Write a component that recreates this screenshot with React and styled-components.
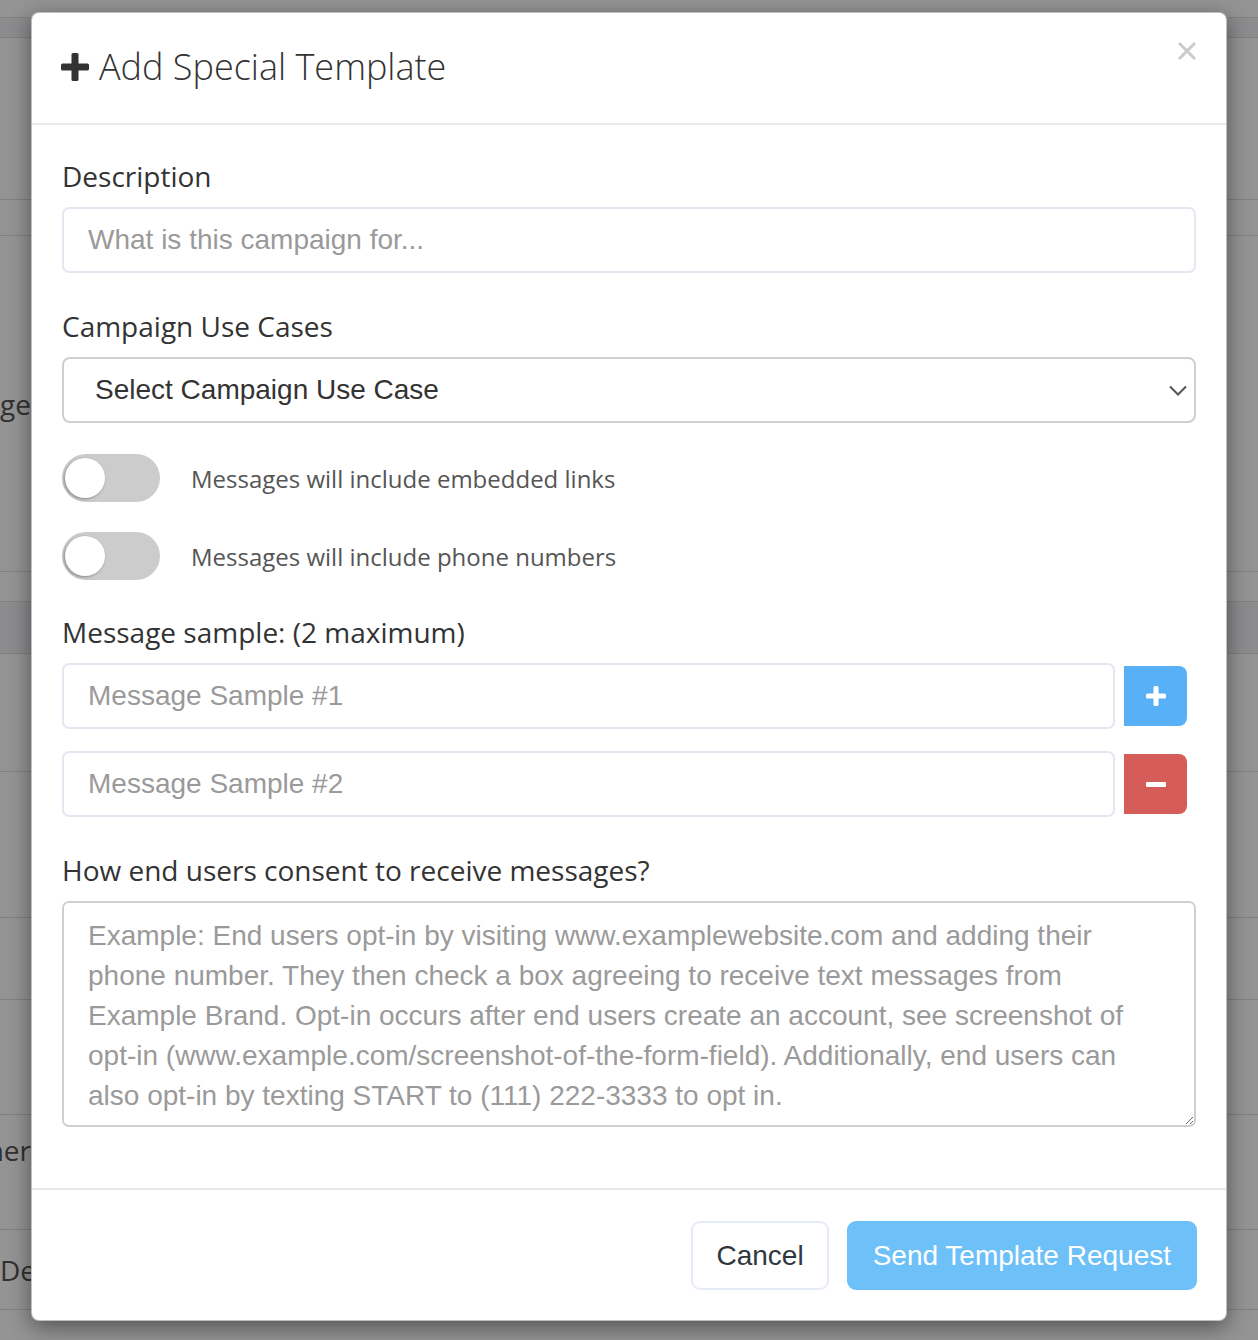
import React from "react";
import styled, { createGlobalStyle } from "styled-components";

const GlobalStyle = createGlobalStyle`
  html, body {
    margin: 0;
    padding: 0;
    background: #ffffff;
  }
  body {
    font-family: "Open Sans", "Liberation Sans", sans-serif;
    overflow: hidden;
  }
  * {
    box-sizing: border-box;
  }
`;

const Page = styled.div`
  position: relative;
  width: 1258px;
  height: 1340px;
  overflow: hidden;
  background: #fff;
`;

/* the list page that sits under the dialog */
const PageRow = styled.div`
  height: ${p => p.h}px;
  display: flex;
  align-items: ${p => (p.top ? "flex-start" : "center")};
  padding-top: ${p => p.top || 0}px;
  justify-content: space-between;
  background: ${p => (p.shade ? "#f1f2f5" : "#fff")};
  border-bottom: 1px solid #dcdcdc;
  font-size: 28px;
  color: #555;
  white-space: nowrap;
`;

const PageCell = styled.div`
  width: 31px;
  overflow: hidden;
  display: flex;
  justify-content: ${p => (p.end ? "flex-end" : "flex-start")};
`;

const Backdrop = styled.div`
  position: absolute;
  inset: 0;
  background: rgba(0, 0, 0, 0.42);
`;

const Dialog = styled.div`
  position: absolute;
  left: 31px;
  top: 12px;
  width: 1196px;
  background: #fff;
  border-radius: 8px;
  border: 1px solid rgba(0, 0, 0, 0.25);
  box-shadow: 0 6px 22px rgba(0, 0, 0, 0.45);
  display: flex;
  flex-direction: column;
`;

const Header = styled.div`
  height: 112px;
  padding: 0 28px 0 29px;
  display: flex;
  align-items: flex-start;
  justify-content: space-between;
  border-bottom: 2px solid #e8e8e8;
`;

const Title = styled.h4`
  margin: 31px 0 0;
  display: flex;
  align-items: center;
  gap: 10px;
  font-family: "Open Sans", sans-serif;
  font-weight: 300;
  font-size: 36px;
  line-height: 46px;
  color: #333;
`;

const CloseButton = styled.button`
  margin-top: 27px;
  padding: 0;
  border: none;
  background: none;
  width: 22px;
  height: 22px;
  display: flex;
  align-items: center;
  justify-content: center;
  cursor: pointer;
`;

const Body = styled.div`
  padding: 32px 30px 61px 30px;
  display: flex;
  flex-direction: column;
`;

const Group = styled.div`
  display: flex;
  flex-direction: column;
  margin-bottom: ${p => (p.mb === undefined ? 34 : p.mb)}px;
`;

const Label = styled.label`
  font-family: "Open Sans", sans-serif;
  font-size: 28px;
  line-height: 38px;
  color: #333;
  margin-bottom: 12px;
`;

const TextInput = styled.input`
  height: 66px;
  width: 100%;
  border: 2px solid #e6e6f3;
  border-radius: 7px;
  padding: 0 24px;
  font-family: "Liberation Sans", Arial, sans-serif;
  font-size: 28px;
  color: #333;
  outline: none;
  &::placeholder {
    color: #9a9a9a;
  }
`;

const SelectBox = styled.div`
  height: 66px;
  border: 2px solid #cfcfcf;
  border-radius: 8px;
  padding: 0 7px 0 31px;
  display: flex;
  align-items: center;
  justify-content: space-between;
  font-family: "Liberation Sans", Arial, sans-serif;
  font-size: 28px;
  color: #333;
`;

const ToggleRow = styled.div`
  display: flex;
  align-items: center;
  gap: 31px;
  margin-bottom: ${p => p.mb}px;
`;

const Track = styled.span`
  position: relative;
  width: 98px;
  height: 48px;
  border-radius: 24px;
  background: #cccccc;
  flex-shrink: 0;
  &::after {
    content: "";
    position: absolute;
    left: 3px;
    top: 4px;
    width: 40px;
    height: 40px;
    border-radius: 50%;
    background: #fff;
    box-shadow: -1px 1px 3px rgba(0, 0, 0, 0.35);
  }
`;

const ToggleText = styled.span`
  font-family: "Open Sans", sans-serif;
  font-size: 24px;
  color: #555;
`;

const SampleRow = styled.div`
  display: grid;
  grid-template-columns: 1fr 63px;
  column-gap: 9px;
  align-items: center;
  margin-right: 9px;
  margin-bottom: ${p => (p.last ? 0 : 22)}px;
`;

const IconButton = styled.button`
  height: 60px;
  border: none;
  border-radius: 0 8px 8px 0;
  background: ${p => (p.danger ? "#d65c5a" : "#58b1f6")};
  display: flex;
  align-items: center;
  justify-content: center;
  padding: 0;
  cursor: pointer;
`;

const TextArea = styled.textarea`
  height: 226px;
  width: 100%;
  resize: vertical;
  border: 2px solid #cfcfcf;
  border-radius: 7px;
  padding: 13px 24px;
  font-family: "Liberation Sans", Arial, sans-serif;
  font-size: 28px;
  line-height: 40px;
  color: #333;
  outline: none;
  &::placeholder {
    color: #9a9a9a;
  }
`;

const Footer = styled.div`
  border-top: 2px solid #e8e8e8;
  padding: 31px 29px 30px;
  display: flex;
  justify-content: flex-end;
  gap: 18px;
`;

const Button = styled.button`
  height: 69px;
  padding: 0 ${p => (p.primary ? 24 : 23)}px;
  border-radius: 9px;
  border: 2px solid ${p => (p.primary ? "#6ec0f9" : "#e6ebf8")};
  background: ${p => (p.primary ? "#6ec0f9" : "#fff")};
  color: ${p => (p.primary ? "#fff" : "#2f3740")};
  font-family: "Liberation Sans", Arial, sans-serif;
  font-size: 28px;
  cursor: pointer;
`;

const PlusGlyph = ({ size = 28, color = "#333", bar = 7 }) => (
  <svg width={size} height={size} viewBox={`0 0 ${size} ${size}`}>
    <rect x={(size - bar) / 2} y="0" width={bar} height={size} rx="1.5" fill={color} />
    <rect x="0" y={(size - bar) / 2} width={size} height={bar} rx="1.5" fill={color} />
  </svg>
);

const backRows = [
  { h: 18 },
  { h: 20, shade: true },
  { h: 162 },
  { h: 36 },
  { h: 336, end: "ge" },
  { h: 30 },
  { h: 52, shade: true },
  { h: 118 },
  { h: 146 },
  { h: 82 },
  { h: 115 },
  { h: 115, end: "ner", top: 16 },
  { h: 80, start: "De" },
];

const App = () => {
  return (
    <>
      <GlobalStyle />
      <Page>
        {backRows.map((r, i) => (
          <PageRow key={i} h={r.h} shade={r.shade} top={r.top}>
            <PageCell end={!!r.end}>{r.end || r.start}</PageCell>
          </PageRow>
        ))}
        <Backdrop />
        <Dialog>
          <Header>
            <Title>
              <PlusGlyph size={28} bar={7} />
              Add Special Template
            </Title>
            <CloseButton aria-label="Close">
              <svg width="20" height="20" viewBox="0 0 20 20">
                <path d="M2 2 L18 18 M18 2 L2 18" stroke="#cbcbcb" strokeWidth="3" />
              </svg>
            </CloseButton>
          </Header>
          <Body>
            <Group>
              <Label>Description</Label>
              <TextInput placeholder="What is this campaign for..." />
            </Group>
            <Group mb={31}>
              <Label>Campaign Use Cases</Label>
              <SelectBox>
                Select Campaign Use Case
                <svg width="18" height="11" viewBox="0 0 18 11">
                  <path d="M1 1.5 L9 9.5 L17 1.5" fill="none" stroke="#555" strokeWidth="2" />
                </svg>
              </SelectBox>
            </Group>
            <ToggleRow mb={30}>
              <Track />
              <ToggleText>Messages will include embedded links</ToggleText>
            </ToggleRow>
            <ToggleRow mb={33}>
              <Track />
              <ToggleText>Messages will include phone numbers</ToggleText>
            </ToggleRow>
            <Group>
              <Label>Message sample: (2 maximum)</Label>
              <SampleRow>
                <TextInput placeholder="Message Sample #1" />
                <IconButton aria-label="Add sample">
                  <PlusGlyph size={20} bar={5} color="#fff" />
                </IconButton>
              </SampleRow>
              <SampleRow last>
                <TextInput placeholder="Message Sample #2" />
                <IconButton danger aria-label="Remove sample">
                  <svg width="20" height="5" viewBox="0 0 20 5">
                    <rect width="20" height="5" rx="1" fill="#fff" />
                  </svg>
                </IconButton>
              </SampleRow>
            </Group>
            <Group mb={0}>
              <Label>How end users consent to receive messages?</Label>
              <TextArea placeholder="Example: End users opt-in by visiting www.examplewebsite.com and adding their phone number. They then check a box agreeing to receive text messages from Example Brand. Opt-in occurs after end users create an account, see screenshot of opt-in (www.example.com/screenshot-of-the-form-field). Additionally, end users can also opt-in by texting START to (111) 222-3333 to opt in." />
            </Group>
          </Body>
          <Footer>
            <Button>Cancel</Button>
            <Button primary>Send Template Request</Button>
          </Footer>
        </Dialog>
      </Page>
    </>
  );
};

export default App;
